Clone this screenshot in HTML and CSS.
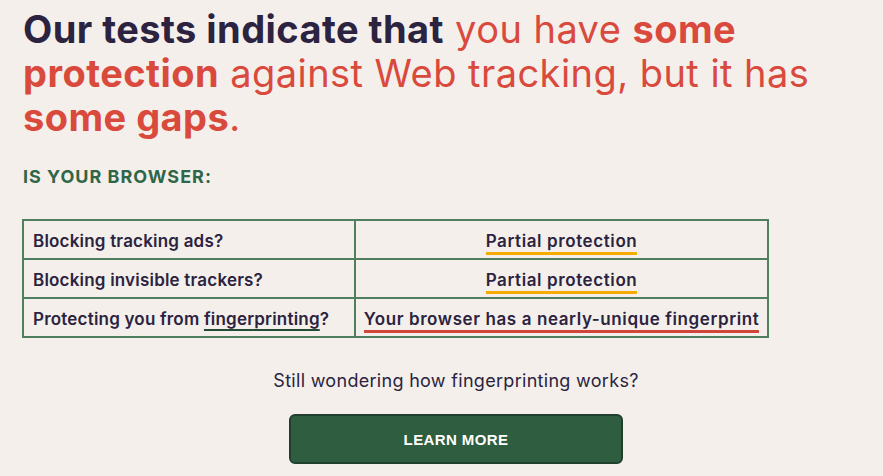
FILE: index.html
```html
<!doctype html>
<html lang="en">
    <head>
        <meta charset="UTF-8" />
        <meta name="viewport" content="width=device-width, initial-scale=1.0" />
        <title>Cover Your Tracks</title>
        <link rel="stylesheet" href="styles.css">
    </head>
    <body>
        <div class="results">
            <h1 class="verdict">
                <strong class="dark">Our tests indicate that</strong>
                you have <strong>some protection</strong> against Web tracking, but it has <strong>some gaps</strong>.
            </h1>
            <h2 class="subhead">IS YOUR BROWSER:</h2>
            <table class="summary">
                <tbody>
                    <tr>
                        <td class="question">Blocking tracking ads?</td>
                        <td class="answer"><span class="partial">Partial protection</span></td>
                    </tr>
                    <tr>
                        <td class="question">Blocking invisible trackers?</td>
                        <td class="answer"><span class="partial">Partial protection</span></td>
                    </tr>
                    <tr>
                        <td class="question">Protecting you from <a href="#" class="term">fingerprinting</a>?</td>
                        <td class="answer"><span class="bad">Your browser has a nearly-unique fingerprint</span></td>
                    </tr>
                </tbody>
            </table>
            <div class="more">
                <p>Still wondering how fingerprinting works?</p>
                <button class="learn">LEARN MORE</button>
            </div>
        </div>
    </body>
</html>
```

FILE: styles.css
```css
:root {
    --bg: #f4efeb;
    --ink: #2b2340;
    --red: #d94a3d;
    --green: #2f5d40;
    --line: #4f7f5f;
    --amber: #f5ab00;
}
body {
    background: var(--bg);
    color: var(--ink);
    font-family: Inter, "Open Sans", sans-serif;
    margin: 0;
    overflow: hidden;
}
.results {
    width: 866px;
    margin-left: 23px;
}
.verdict {
    font-size: 38px;
    line-height: 44px;
    font-weight: 400;
    color: var(--red);
    margin: 7px 0 0;
    letter-spacing: 0.45px;
}
.verdict strong {
    font-weight: 700;
}
.verdict .dark {
    color: var(--ink);
}
.subhead {
    font-size: 18px;
    line-height: 24px;
    font-weight: 700;
    letter-spacing: 1px;
    color: #2f6648;
    margin: 26px 0 30px;
}
.summary {
    width: 747px;
    margin-left: -1px;
    border-collapse: collapse;
    table-layout: fixed;
}
.summary td {
    border: 2px solid var(--line);
    height: 35px;
    padding: 2px 9px 0;
    font-size: 17px;
    font-weight: 600;
    white-space: nowrap;
    box-sizing: border-box;
}
.summary tr {
    height: 39px;
}
.summary .question {
    width: 332px;
    letter-spacing: 0.2px;
}
.summary .answer {
    text-align: center;
    padding: 2px 6px 0;
    letter-spacing: 0.6px;
}
.partial, .bad {
    padding-bottom: 1px;
    border-bottom: 3px solid var(--amber);
}
.bad {
    border-bottom-color: #d0463a;
}
.term {
    color: var(--ink);
    text-decoration: underline;
    text-decoration-color: #244b33;
    text-decoration-thickness: 1.5px;
    text-underline-offset: 4px;
}
.more {
    text-align: center;
}
.more p {
    margin: 31px 0 21px;
    font-size: 18px;
    line-height: 24px;
    letter-spacing: 0.3px;
}
.learn {
    width: 334px;
    height: 50px;
    background: var(--green);
    border: 2px solid #203f2c;
    border-radius: 6px;
    color: white;
    font-family: "Liberation Sans", Arial, sans-serif;
    font-size: 15px;
    font-weight: 700;
    letter-spacing: 0.4px;
    cursor: pointer;
}
```
